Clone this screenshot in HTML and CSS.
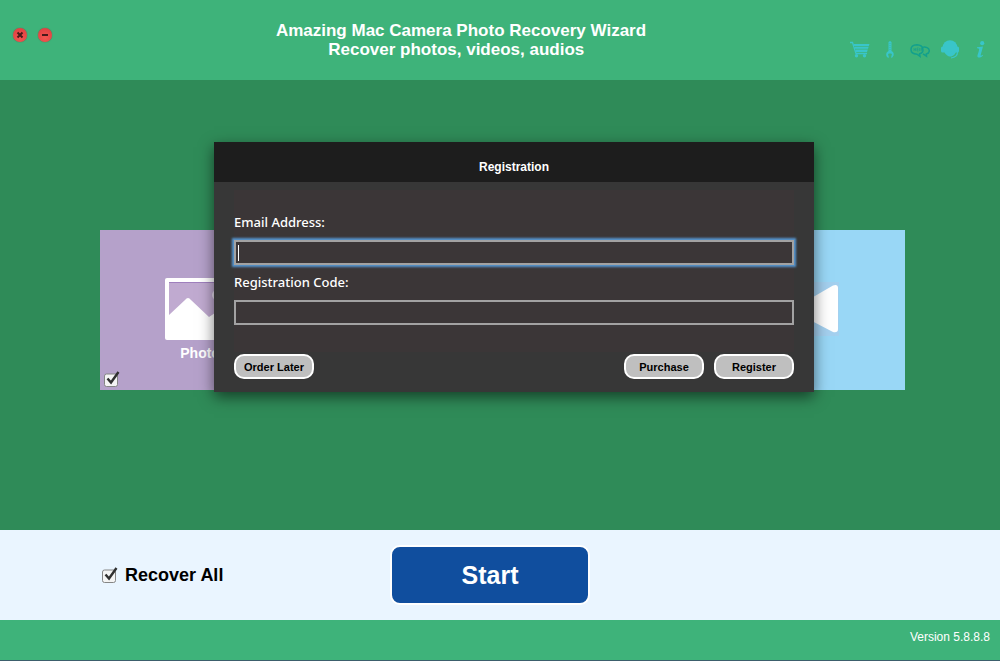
FILE: index.html
```html
<!DOCTYPE html>
<html lang="en">
<head>
<meta charset="utf-8">
<title>Amazing Mac Camera Photo Recovery Wizard</title>
<link rel="stylesheet" href="styles.css">
</head>
<body>
<header class="header">
  <div class="window-controls">
    <button class="window-button" type="button" aria-label="Close">
      <svg viewBox="0 0 14 14"><path d="M4.500 4.500l5 5M9.500 4.500l-5 5" stroke="#4a1a1a" stroke-width="2"/></svg>
    </button>
    <button class="window-button" type="button" aria-label="Minimize">
      <svg viewBox="0 0 14 14"><path d="M4 7h6" stroke="#4a1a1a" stroke-width="2"/></svg>
    </button>
  </div>
  <h1 class="title">Amazing Mac Camera Photo Recovery Wizard<br>Recover photos, videos, audios&nbsp;&nbsp;</h1>
  <nav class="tools">
    <button class="tool" type="button" aria-label="Buy">
      <svg viewBox="0 0 20 20"><path d="M0 2.500h2.500l3.500 11h11" fill="none" stroke="currentColor" stroke-width="1.300"/><path d="M3.500 4H19.500L17 12H6z" fill="currentColor"/><path d="M4 6.500h15M5 9.200h13" stroke="#3eb37a" stroke-width=".7"/><circle cx="6.500" cy="15.800" r="1.700" fill="currentColor"/><circle cx="14.500" cy="15.800" r="1.700" fill="currentColor"/></svg>
    </button>
    <button class="tool" type="button" aria-label="Activate">
      <svg viewBox="0 0 20 20"><path d="M8.500 2l1.500-1 1.500 1v9a3.700 3.700 0 0 1 1 6.200c-.4.400-.8.600-1.200.7v-1.900l.7-1.300-.8-1.200H8.800l-.8 1.200.7 1.300v1.900c-3.200-.9-3.400-5.500-.2-6.900z" fill="currentColor"/><path d="M10 3v7" stroke="#3eb37a" stroke-width=".6" stroke-dasharray="1 1"/></svg>
    </button>
    <button class="tool tool-help" type="button" aria-label="Help">
      <svg viewBox="0 0 20 20"><g fill="none" stroke="currentColor" stroke-width="1.500"><path d="M7 14.200c-8-.4-8-9 0-9.400 7.200.3 7.600 7.500 2.600 9l.4 2.600z"/><path d="M12.500 7.400c3-.9 6.800.5 6.800 3.400 0 1.700-1.300 2.800-3 3.200l.2 2.200-3.500-2.400"/></g><path d="M4 8v3M5.500 8v3M4 9.500h1.500M8.500 8H7v3h1.500M7 9.500h1.500M9.500 8v3M11 11V8h1v2h-1" fill="none" stroke="currentColor" stroke-width=".6"/></svg>
    </button>
    <button class="tool" type="button" aria-label="Support">
      <svg viewBox="0 0 20 20"><circle cx="10" cy="7.500" r="7.300" fill="currentColor"/><rect x="1" y="6.500" width="4" height="6" rx="1.500" fill="currentColor"/><rect x="15" y="6.500" width="4" height="6" rx="1.500" fill="currentColor"/><path d="M4 11c1 3.500 4 5.500 6.500 5.500s5-2.500 5.500-5z" fill="currentColor"/><path d="M17.500 12c0 3-2.500 5.500-6.500 6" fill="none" stroke="currentColor" stroke-width="1.200"/></svg>
    </button>
    <button class="tool" type="button" aria-label="About">
      <svg viewBox="0 0 20 20"><circle cx="12.200" cy="3.200" r="2.100" fill="currentColor"/><path d="M7 7.200l6-.7-2.300 8.500c-.2 1 .6.800 1.700-.2l.6.600c-1.500 2.200-5.600 3.200-5.600.6 0-.6 1.500-5 1.700-6.300.2-1-.5-1.500-2.100-1.500z" fill="currentColor"/></svg>
    </button>
  </nav>
</header>

<main class="stage">
  <div class="tiles">
    <section class="tile tile-photos">
      <svg class="tile-icon" viewBox="0 0 82 62"><rect width="82" height="62" rx="2" fill="#fff"/><path d="M4 4h74v33L65 24 47 37l-3 2L26 22Q23 18 20 22L4 37z" fill="#c0aad0"/><path d="M4 4.500h74" stroke="#9f7fbd"/><circle cx="52" cy="17" r="5" fill="#e5dcec"/></svg>
      <label class="tile-label" for="photos">Photos</label>
      <input class="check tile-check" id="photos" type="checkbox" checked>
    </section>
    <section class="tile tile-videos">
      <svg class="tile-icon" viewBox="0 0 82 62"><path d="M50 4h31v54H50z" fill="#a4d0ef"/><path d="M2 12h46v38H2z" fill="#fff"/><path d="M50 22L75 7.500Q80 6 80 10v41q0 4-5 3L50 41z" fill="#fff"/></svg>
    </section>
  </div>

  <div class="overlay">
    <form class="dialog" role="dialog" aria-labelledby="dialog-title">
      <h2 class="dialog-title" id="dialog-title">Registration</h2>
      <div class="fields">
        <label class="field-label" for="email">Email Address:</label>
        <input class="field field-active" id="email" type="text">
        <label class="field-label" for="code">Registration Code:</label>
        <input class="field" id="code" type="text">
      </div>
      <div class="actions">
        <button class="pill pill-first" type="button">Order Later</button>
        <button class="pill" type="button">Purchase</button>
        <button class="pill" type="button">Register</button>
      </div>
    </form>
  </div>
</main>

<section class="launch">
  <label class="recover"><input class="check" type="checkbox" checked>Recover All</label>
  <button class="start" type="button">Start</button>
</section>

<footer class="footer">Version 5.8.8.8</footer>
</body>
</html>
```

FILE: styles.css
```css
* {
  box-sizing: border-box;
}

body {
  margin: 0;
  min-height: 100vh;
  display: flex;
  flex-direction: column;
  font-family: "Liberation Sans", Arial, sans-serif;
  background: #2f8b58;
}

button,
input {
  font-family: inherit;
  margin: 0;
}

.header {
  height: 80px;
  display: flex;
  background: #3eb37a;
}

.window-controls {
  width: 82px;
  padding: 28px 13px;
  display: flex;
  gap: 11px;
}

.window-button {
  width: 14px;
  height: 14px;
  padding: 0;
  border: 0;
  border-radius: 50%;
  background: radial-gradient(circle at 50% 70%, #f45550, #dc3b3e);
  box-shadow: 0 0 1px 0 #6b3a2f;
}

.window-button svg {
  display: block;
}

.title {
  flex: 1;
  margin: 0;
  padding-top: 21px;
  font-size: 17px;
  line-height: 19px;
  text-align: center;
  color: #fff;
}

.tools {
  width: 160px;
  padding: 40px 10px 0;
  display: flex;
  gap: 10px;
}

.tool {
  width: 20px;
  height: 20px;
  padding: 0;
  border: 0;
  background: none;
  color: #39c5c9;
}

.tool svg {
  display: block;
}

.tool-help {
  color: #12a08d;
}

.stage {
  position: relative;
  flex: 1;
  min-height: 340px;
  padding: 150px 95px 0 100px;
}

.tiles {
  display: flex;
  justify-content: space-between;
}

.tile {
  position: relative;
  width: 212px;
  height: 160px;
  padding-top: 48px;
  display: flex;
  flex-direction: column;
  align-items: center;
}

.tile-photos {
  background: #b5a1ca;
}

.tile-videos {
  background: #99d7f6;
}

.tile-icon {
  width: 82px;
  height: 62px;
}

.tile-label {
  padding: 4px 4px 0 0;
  font-size: 14px;
  line-height: 18px;
  font-weight: bold;
  color: #fff;
}

.check {
  appearance: none;
  flex: none;
  width: 16px;
  height: 16px;
  background: url("data:image/svg+xml,%3Csvg xmlns='http://www.w3.org/2000/svg' viewBox='0 0 16 16'%3E%3Crect x='.5' y='3' width='13' height='12.500' rx='2' fill='%23f4f4f4' stroke='%23858585'/%3E%3Cpath d='M3.500 7.500L7 11.500L14.500 1' fill='none' stroke='%23303030' stroke-width='2.400'/%3E%3C/svg%3E");
}

.tile-check {
  position: absolute;
  left: 4px;
  bottom: 3px;
}

.overlay {
  position: absolute;
  inset: 0;
  padding: 62px 0 0 28px;
  display: flex;
  justify-content: center;
  align-items: flex-start;
}

.dialog {
  width: 600px;
  background: #373737;
  box-shadow: 0 5px 14px rgba(0, 0, 0, 0.55);
}

.dialog-title {
  height: 40px;
  margin: 0;
  padding-top: 16px;
  font-size: 12px;
  line-height: 18px;
  text-align: center;
  color: #fff;
  background: #1d1d1d;
}

.fields {
  margin: 8px 20px 0;
  padding: 20px 0 22px;
  display: flex;
  flex-direction: column;
  background: #3b3637;
}

.field-label {
  height: 30px;
  padding-top: 2px;
  font-family: "Noto Sans", sans-serif;
  font-size: 13px;
  line-height: 20px;
  font-weight: 500;
  color: #fff;
}

.field {
  width: 100%;
  height: 25px;
  margin-bottom: 5px;
  padding: 0 4px;
  border: 2px solid #a2a2a2;
  border-radius: 0;
  outline: 0;
  background: #3b3637;
  color: #fff;
}

.field-active {
  background: linear-gradient(#fff, #fff) 2px 3px / 1px 16px no-repeat #3b3637;
  box-shadow: 0 0 2px 2px #5593cc;
}

.actions {
  padding: 2px 20px 13px;
  display: flex;
  gap: 10px;
}

.pill {
  width: 80px;
  height: 25px;
  padding: 0;
  border: 2px solid #fff;
  border-radius: 10px;
  background: #bfbfbf;
  font-size: 11px;
  font-weight: bold;
  color: #000;
}

.pill-first {
  margin-right: auto;
}

.launch {
  height: 90px;
  padding-right: 20px;
  display: grid;
  grid-template-columns: 1fr 200px 1fr;
  align-items: center;
  background: #eaf5ff;
}

.recover {
  padding-left: 102px;
  display: flex;
  align-items: center;
  gap: 7px;
  font-size: 18px;
  font-weight: bold;
  color: #000;
}

.start {
  height: 60px;
  padding: 0;
  border: 2px solid #fff;
  border-radius: 10px;
  background: #104e9e;
  font-size: 25px;
  font-weight: bold;
  color: #fff;
}

.footer {
  height: 41px;
  padding: 8px 10px 0;
  border-bottom: 1px solid #3c5f6c;
  font-size: 12px;
  line-height: 18px;
  text-align: right;
  color: #fff;
  background: #3eb37a;
}
```
